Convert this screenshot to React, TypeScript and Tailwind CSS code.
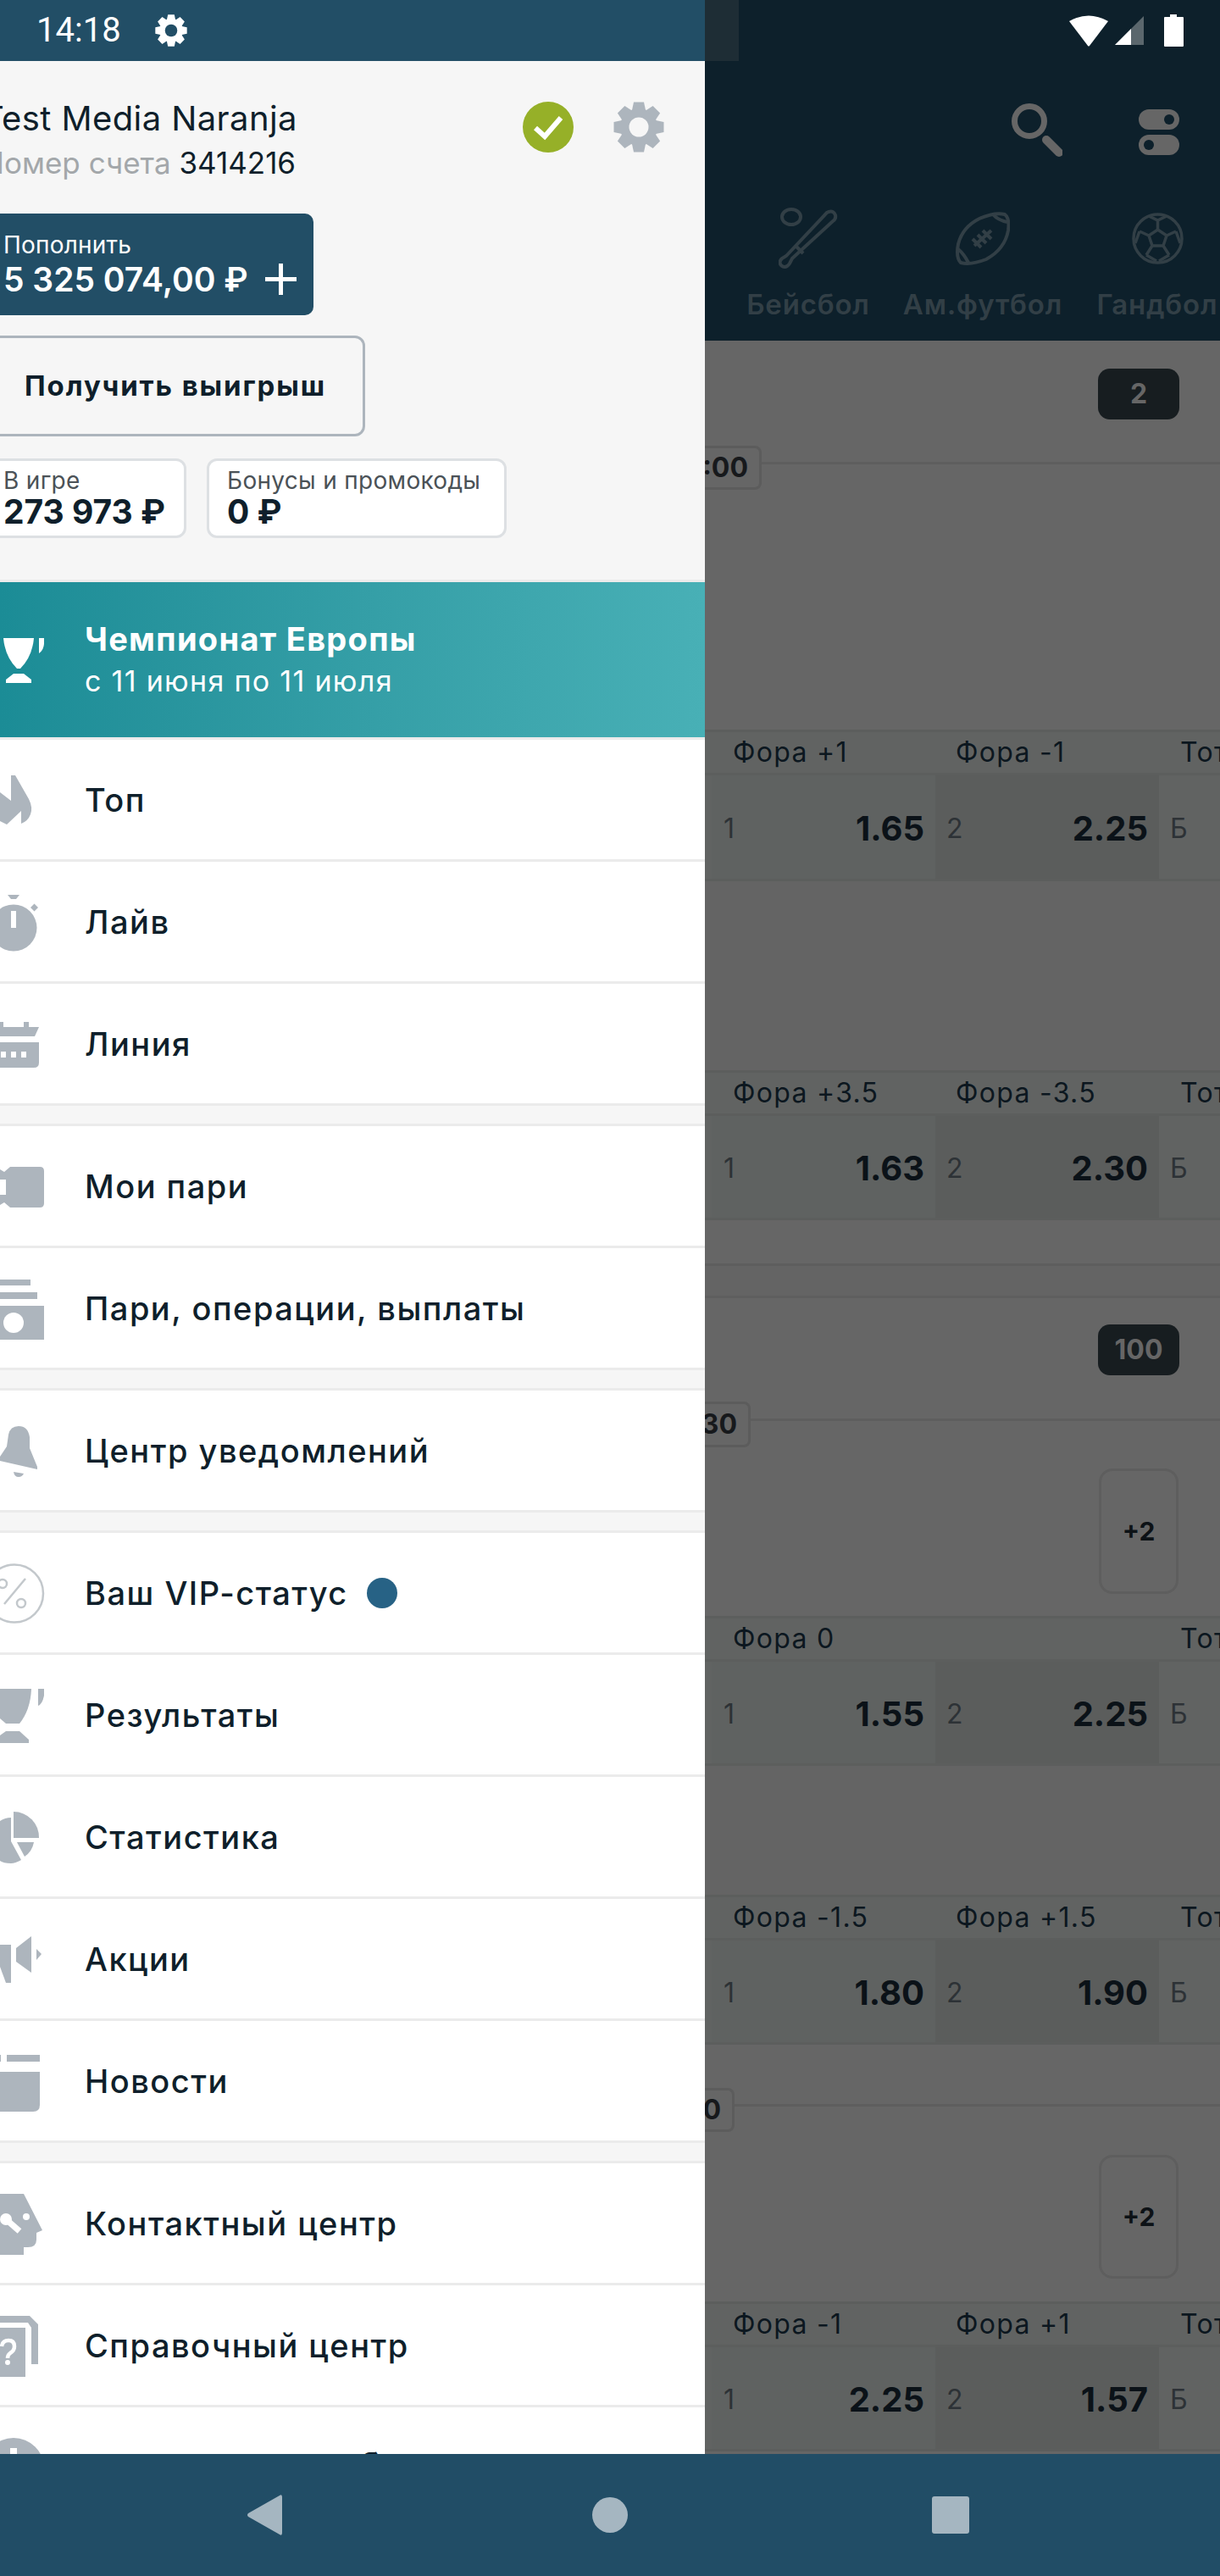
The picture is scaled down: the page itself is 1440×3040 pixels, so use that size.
import React from "react";

const G = "#adb5bd";

function Gear({ size, fill, hole }: { size: number; fill: string; hole: string }) {
  const angles = [0, 45, 90, 135, 180, 225, 270, 315];
  return (
    <svg width={size} height={size} viewBox="0 0 60 60">
      <circle cx="30" cy="30" r="22" fill={fill} />
      {angles.map((a) => (
        <path key={a} d="M24 0.5 H36 L38 10 H22 Z" fill={fill} transform={`rotate(${a} 30 30)`} />
      ))}
      <circle cx="30" cy="30" r="11.5" fill={hole} />
    </svg>
  );
}

function RowIcon({ children }: { children: React.ReactNode }) {
  return (
    <svg width="100" height="141" viewBox="0 0 100 141" fill={G} className="shrink-0">
      {children}
    </svg>
  );
}

const menu: { label: string; icon: React.ReactNode; dot?: boolean }[][] = [
  [
    {
      label: "Топ",
      icon: <path d="M13 42 L18 42 L34 70 Q39 80 36 88 Q33 96 25 99 L25 84 L8 100 L0 96 L0 62 L13 72 Z" />,
    },
    {
      label: "Лайв",
      icon: (
        <>
          <circle cx="16" cy="78" r="27.5" />
          <path d="M9 39 H23 L19 44 H13 Z" />
          <path d="M40.5 49.5 L45 54 L40.5 58.5 L36 54 Z" />
          <rect x="13" y="58" width="6" height="20" fill="#fff" />
        </>
      ),
    },
    {
      label: "Линия",
      icon: (
        <>
          <rect x="0" y="45" width="4" height="6" />
          <rect x="28" y="45" width="6" height="6" />
          <path d="M0 51 H46 L41 62 H0 Z" />
          <path d="M0 69 H46 V93 Q46 99 40 99 H0 Z" />
          <rect x="1" y="80" width="6" height="7" fill="#fff" />
          <rect x="13" y="80" width="6" height="7" fill="#fff" />
          <rect x="25" y="80" width="6" height="7" fill="#fff" />
        </>
      ),
    },
  ],
  [
    {
      label: "Мои пари",
      icon: (
        <>
          <path d="M12 48 H47 Q52 48 52 53 V91 Q52 96 47 96 H12 L5 90 L0 93 V51 L5 54 Z" />
          <rect x="0" y="63" width="7" height="18" fill="#fff" />
        </>
      ),
    },
    {
      label: "Пари, операции, выплаты",
      icon: (
        <>
          <rect x="0" y="37" width="36" height="7" />
          <rect x="0" y="52" width="44" height="8" />
          <rect x="0" y="68" width="52" height="40" />
          <ellipse cx="16" cy="88" rx="12" ry="12" fill="#fff" />
        </>
      ),
    },
  ],
  [
    {
      label: "Центр уведомлений",
      icon: (
        <>
          <path d="M22 42 Q33 42 35 55 L35 68 L44 90 V93 L0 83 V78 L8 66 L10 52 Q12 42 22 42 Z" />
          <path d="M16 96 L28 98 Q26 102 22 102 Q17 102 16 96 Z" />
        </>
      ),
    },
  ],
  [
    {
      label: "Ваш VIP-статус",
      dot: true,
      icon: (
        <g fill="none" stroke="#c3c8cc" strokeWidth="2.5">
          <circle cx="17" cy="71.5" r="34" />
          <path d="M5 84 L30 54" strokeWidth="2.5" />
          <circle cx="3" cy="60" r="5" />
          <circle cx="25" cy="83" r="5" />
        </g>
      ),
    },
    {
      label: "Результаты",
      icon: (
        <>
          <path d="M0 40 H37 Q36 65 23 81 H7 L0 75 Z" />
          <path d="M45 40 H52 V48 Q50 58 45 60 Z" />
          <path d="M7 90 H23 L34 100 V104 H0 V95 Z" />
        </>
      ),
    },
    {
      label: "Статистика",
      icon: (
        <>
          <path d="M16 41 A30 30 0 0 1 46 72 H16 Z" />
          <path d="M13 48 V76 L25 98 Q18 102 13 102 Q4 102 0 99 V52 Q6 48 13 48 Z" />
          <path d="M20 77 H40 Q38 88 29 94 Z" />
        </>
      ),
    },
    {
      label: "Акции",
      icon: (
        <>
          <path d="M0 54 H13 V99 H7 L0 80 Z" />
          <path d="M37 44 V87 L19 74 V58 Z" />
          <path d="M43 59 L49 65 L43 72 Z" />
        </>
      ),
    },
    {
      label: "Новости",
      icon: (
        <>
          <rect x="0" y="40" width="1" height="8" />
          <rect x="8" y="40" width="39" height="8" />
          <path d="M0 60 H47 V99 Q47 107 39 107 H0 Z" />
        </>
      ),
    },
  ],
  [
    {
      label: "Контактный центр",
      icon: (
        <>
          <path d="M0 36 H28 L50 79 L43 82 V90 Q43 99 33 99 H28 V108 H0 Z" />
          <circle cx="7" cy="66" r="7" fill="#fff" />
          <path d="M7 66 L23 80" stroke="#fff" strokeWidth="7" fill="none" />
          <circle cx="31" cy="63" r="4" fill="#fff" />
        </>
      ),
    },
    {
      label: "Справочный центр",
      icon: (
        <>
          <path d="M0 36 H35 L45 46 V93 H37 V50 L33 44 H0 Z" />
          <rect x="0" y="50" width="30" height="58" />
          <path d="M2 72 Q3 65 10 65 Q17 65 17 72 Q17 77 12 80 Q9 82 9 86" fill="none" stroke="#fff" strokeWidth="4.5" />
          <circle cx="9" cy="91" r="3" fill="#fff" />
        </>
      ),
    },
  ],
];

function MenuRow({ label, icon, dot }: { label: string; icon: React.ReactNode; dot?: boolean }) {
  return (
    <div className="flex h-[141px] items-center bg-white">
      <RowIcon>{icon}</RowIcon>
      <span className="text-[38px] leading-none font-medium tracking-[1.5px] text-[#0f1f2b]">{label}</span>
      {dot && <span className="ml-[22px] h-[36px] w-[36px] rounded-full bg-[#276285]" />}
    </div>
  );
}

function Line() {
  return <div className="h-[3px] shrink-0 bg-[#ebebeb]" />;
}

function Drawer() {
  return (
    <div className="flex w-[832px] shrink-0 flex-col overflow-hidden bg-white">
      <div className="flex h-[72px] shrink-0 items-center bg-[#224e66]">
        <span className="ml-[43px] font-['Roboto',sans-serif] text-[40px] leading-none text-white">14:18</span>
        <span className="ml-[40px]">
          <Gear size={38} fill="#ffffff" hole="#224e66" />
        </span>
      </div>
      <div className="flex h-[612px] shrink-0 flex-col bg-[#f6f6f6] pt-[43px] pl-[5px]">
        <div className="flex justify-between">
          <div className="-ml-[26px]">
            <div className="h-[52px] text-[40px] leading-[50px] tracking-[0.4px] whitespace-nowrap text-[#0f1f2b]">Test Media Naranja</div>
            <div className="h-[52px] text-[35px] leading-[50px] whitespace-nowrap text-[#a3a7aa]">
              Номер счета <span className="text-[#0f1f2b]">3414216</span>
            </div>
          </div>
          <div className="mt-[5px] mr-[48px] flex gap-[47px]">
            <svg width="60" height="60" viewBox="0 0 60 60">
              <circle cx="30" cy="30" r="30" fill="#96b028" />
              <path d="M15 31 L26 41 L45 19" stroke="#fff" strokeWidth="6" fill="none" />
            </svg>
            <Gear size={60} fill={G} hole="#f6f6f6" />
          </div>
        </div>
        <div className="mt-[33px] -ml-[25px] flex h-[120px] w-[390px] flex-col justify-center rounded-[10px] bg-[#224e66] pb-[3px] pl-[24px] text-white">
          <div className="text-[28px] leading-[38px] tracking-[0.2px]">Пополнить</div>
          <div className="flex items-center text-[39px] leading-[44px] font-semibold">
            5 325 074,00 ₽
            <svg width="37" height="37" viewBox="0 0 37 37" className="ml-[20px]">
              <path d="M18.5 0 V37 M0 18.5 H37" stroke="#fff" strokeWidth="5" />
            </svg>
          </div>
        </div>
        <div className="mt-[24px] -ml-[25px] flex h-[119px] w-[451px] items-center rounded-[12px] border-[3px] border-[#adb5bd] pl-[46px]">
          <span className="text-[33px] font-bold tracking-[1.9px] text-[#0f1f2b]">Получить выигрыш</span>
        </div>
        <div className="mt-[26px] flex gap-[24px]">
          <div className="-ml-[25px] flex h-[94px] w-[240px] shrink-0 flex-col justify-center rounded-[12px] border-[3px] border-[#dde0e3] bg-white pb-[3px] pl-[21px]">
            <div className="text-[28px] leading-[34px] tracking-[0.3px] text-[#4b5257]">В игре</div>
            <div className="text-[39px] leading-[40px] font-bold text-[#0f1f2b]">273 973 ₽</div>
          </div>
          <div className="flex h-[94px] w-[354px] shrink-0 flex-col justify-center rounded-[12px] border-[3px] border-[#dde0e3] bg-white pb-[3px] pl-[21px]">
            <div className="text-[28px] leading-[34px] tracking-[0.3px] whitespace-nowrap text-[#4b5257]">Бонусы и промокоды</div>
            <div className="text-[39px] leading-[40px] font-bold text-[#0f1f2b]">0 ₽</div>
          </div>
        </div>
      </div>
      <Line />
      <div className="flex h-[183px] shrink-0 items-center bg-gradient-to-r from-[#1b8c96] to-[#48b0b6]">
        <svg width="100" height="183" viewBox="0 0 100 183" fill="#fff" className="shrink-0">
          <path d="M4 66 H40 Q38 88 24 102 H20 Q6 88 4 66 Z" />
          <path d="M46 66 H52 V73 Q51 81 46 84 Z" />
          <path d="M16 108 H28 L37 115 V119 H7 V115 Z" />
        </svg>
        <div className="text-white">
          <div className="text-[38px] leading-[50px] font-bold tracking-[1.3px] whitespace-nowrap">Чемпионат Европы</div>
          <div className="text-[34px] leading-[50px] tracking-[1.3px] whitespace-nowrap">с 11 июня по 11 июля</div>
        </div>
      </div>
      <Line />
      {menu.map((group, i) => (
        <div key={i} className="shrink-0">
          {i > 0 && <div className="h-[21px] bg-[#f6f6f6]" />}
          {i > 0 && <Line />}
          {group.map((item) => (
            <div key={item.label}>
              <MenuRow {...item} />
              <Line />
            </div>
          ))}
        </div>
      ))}
      <div className="flex h-[141px] shrink-0 bg-white">
        <svg width="60" height="141" viewBox="0 0 60 141" fill={G} className="shrink-0">
          <circle cx="16" cy="72" r="36" />
          <rect x="12" y="48" width="8" height="24" fill="#fff" />
        </svg>
        <span className="mt-[48px] ml-[365px] text-[38px] leading-none font-medium text-[#0f1f2b]">б</span>
      </div>
    </div>
  );
}

function Chip({ text, width, height, mb }: { text: string; width: number; height: number; mb: number }) {
  return (
    <div className="flex items-center">
      <div
        style={{ width, height }}
        className="flex shrink-0 items-center justify-end rounded-r-[8px] border-y-[3px] border-r-[3px] border-[#5c5c5c] pr-[13px] text-[32px] font-bold text-[#17191c]"
      >
        {text}
      </div>
      <div style={{ marginBottom: mb }} className="h-[3px] flex-1 bg-[#5e5e5e]" />
    </div>
  );
}

function Badge({ text }: { text: string }) {
  return (
    <div className="mr-[48px] flex h-[60px] w-[96px] items-center justify-center self-end rounded-[14px] bg-[#171d20] text-[32px] font-bold text-[#666666]">
      {text}
    </div>
  );
}

function Plus({ h }: { h: number }) {
  return (
    <div
      style={{ height: h }}
      className="mr-[49px] flex w-[94px] items-center justify-center self-end rounded-[16px] border-[3px] border-[#5e5e5e] text-[30px] font-bold text-[#0d1216]"
    >
      +2
    </div>
  );
}

function Market({ a, b, o1, o2, tall }: { a: string; b?: string; o1: string; o2: string; tall?: boolean }) {
  return (
    <div className="shrink-0 bg-[#616362]">
      <div className="flex h-[54px] items-center border-y-[3px] border-[#5c5e5d] text-[32px] tracking-[1.3px] whitespace-nowrap text-[#0c171f]">
        <div className="w-[296px] shrink-0 pl-[33px]">{a}</div>
        <div className="w-[265px] shrink-0">{b}</div>
        <div className="shrink-0">Тотал</div>
      </div>
      <div className={`flex items-stretch border-b-[3px] border-[#5c5e5d] pl-[8px] ${tall ? "h-[125px]" : "h-[123px]"}`}>
        <div className="flex w-[264px] shrink-0 items-center justify-between bg-[#5f6261] pt-[4px] pr-[13px] pl-[14px]">
          <span className="text-[32px] text-[#2d3236]">1</span>
          <span className="text-[40px] font-bold text-[#0b1218]">{o1}</span>
        </div>
        <div className="flex w-[264px] shrink-0 items-center justify-between bg-[#5b5d5c] pt-[4px] pr-[13px] pl-[13px]">
          <span className="text-[32px] text-[#2d3236]">2</span>
          <span className="text-[40px] font-bold text-[#0b1218]">{o2}</span>
        </div>
        <div className="flex flex-1 items-center pt-[4px] pl-[13px]">
          <span className="text-[32px] text-[#2d3236]">Б</span>
        </div>
      </div>
    </div>
  );
}

const SPORT = "#323f46";

const sports: { label: string; icon: React.ReactNode }[] = [
  {
    label: "Бейсбол",
    icon: (
      <svg width="70" height="73" viewBox="0 0 70 73" fill="none" stroke={SPORT} strokeWidth="4">
        <ellipse cx="15" cy="11" rx="11" ry="9" />
        <path d="M59 5 Q65 3 67 9 Q68 13 64 16 L16 60 L13 66 Q9 72 4 69 Q-1 65 4 60 L9 57 L57 6 Z" />
        <path d="M21 46 L29 54" />
      </svg>
    ),
  },
  {
    label: "Ам.футбол",
    icon: (
      <svg width="64" height="63" viewBox="0 0 64 63" fill="none" stroke={SPORT} strokeWidth="4">
        <path d="M58 3 Q64 8 62 22 Q58 44 36 56 Q18 63 6 60 Q0 54 3 38 Q8 18 28 8 Q46 0 58 3 Z" />
        <path d="M44 3 Q50 10 61 12 M3 44 Q10 50 15 60" />
        <path d="M22 40 L42 22 M26 27 L36 37 M32 22 L42 32 M20 32 L30 42" />
      </svg>
    ),
  },
  {
    label: "Гандбол",
    icon: (
      <svg width="61" height="61" viewBox="0 0 61 61" fill="none" stroke={SPORT} strokeWidth="3.5">
        <circle cx="30.5" cy="30.5" r="28.5" />
        <path d="M30.5 20 L41 27 L37 39 H24 L20 27 Z" />
        <path d="M30.5 20 V9 M41 27 L52 22 M37 39 L44 50 M24 39 L17 50 M20 27 L9 22 M20 4 L30.5 9 L41 4 M52 22 L57 36 M44 50 L32 57 M17 50 L29 57 M9 22 L4 36" />
      </svg>
    ),
  },
];

function Sports() {
  return (
    <div className="flex h-[402px] shrink-0 flex-col bg-[#0d202b]">
      <div className="flex h-[72px] shrink-0 items-center">
        <div className="h-[72px] w-[40px] bg-[#1e2d35]" />
        <svg width="46" height="38" viewBox="0 0 46 38" className="ml-[390px]" fill="#fff">
          <path d="M0 8 Q23 -5 46 8 L24 37 Q23 38 22 37 Z" />
        </svg>
        <svg width="34" height="34" viewBox="0 0 34 34" className="ml-[8px]">
          <path d="M0 34 L34 0 V34 Z" fill="#5b676d" />
          <path d="M0 34 L19 15 V34 Z" fill="#fff" />
        </svg>
        <svg width="23" height="38" viewBox="0 0 23 38" className="ml-[24px]" fill="#fff">
          <path d="M7 0 H15 V3 H22 Q23 3 23 4 V37 Q23 38 22 38 H1 Q0 38 0 37 V4 Q0 3 1 3 H7 Z" />
        </svg>
      </div>
      <div className="flex h-[173px] shrink-0 items-start pt-[50px]">
        <svg width="60" height="63" viewBox="0 0 60 63" className="ml-[362px]" fill="none">
          <circle cx="21" cy="21" r="17.5" stroke="#666666" strokeWidth="7" />
          <path d="M41 43 L56 58" stroke="#666666" strokeWidth="10" strokeLinecap="round" />
        </svg>
        <svg width="48" height="54" viewBox="0 0 48 54" className="mt-[7px] ml-[90px]">
          <rect x="0" y="0" width="48" height="24" rx="12" fill="#666666" />
          <circle cx="36" cy="12" r="6" fill="#0d202b" />
          <rect x="0" y="30" width="48" height="24" rx="12" fill="#666666" />
          <circle cx="12" cy="42" r="6" fill="#0d202b" />
        </svg>
      </div>
      <div className="flex pl-[19px]">
        {sports.map((s) => (
          <div key={s.label} className="flex w-[206px] shrink-0 flex-col items-center">
            <div className="flex h-[73px] items-center">{s.icon}</div>
            <div className="mt-[22px] text-[33px] leading-[38px] font-semibold tracking-[0.8px] whitespace-nowrap text-[#323f46]">
              {s.label}
            </div>
          </div>
        ))}
      </div>
    </div>
  );
}

function Content() {
  return (
    <div className="flex w-[608px] shrink-0 flex-col overflow-hidden bg-[#666666]">
      <Sports />
      <div className="flex h-[459px] shrink-0 flex-col pt-[33px]">
        <Badge text="2" />
        <div className="mt-[31px]">
          <Chip text=":00" width={67} height={52} mb={12} />
        </div>
      </div>
      <Market tall a="Фора +1" b="Фора -1" o1="1.65" o2="2.25" />
      <div className="h-[223px] shrink-0 bg-[#646464]" />
      <Market a="Фора +3.5" b="Фора -3.5" o1="1.63" o2="2.30" />
      <div className="h-[51px] shrink-0 bg-[#666666]" />
      <div className="h-[41px] shrink-0 border-y-[3px] border-[#5e5e5e] bg-[#646464]" />
      <div className="flex h-[375px] shrink-0 flex-col pt-[31px]">
        <Badge text="100" />
        <div className="mt-[31px]">
          <Chip text="30" width={54} height={54} mb={12} />
        </div>
        <div className="mt-[25px] flex flex-col">
          <Plus h={148} />
        </div>
      </div>
      <Market a="Фора 0" o1="1.55" o2="2.25" />
      <div className="h-[152px] shrink-0 bg-[#646464]" />
      <Market a="Фора -1.5" b="Фора +1.5" o1="1.80" o2="1.90" />
      <div className="flex h-[303px] shrink-0 flex-col pt-[51px]">
        <Chip text="0" width={35} height={52} mb={12} />
        <div className="mt-[27px] flex flex-col">
          <Plus h={146} />
        </div>
      </div>
      <Market a="Фора -1" b="Фора +1" o1="2.25" o2="1.57" />
    </div>
  );
}

export default function App() {
  return (
    <div className="flex h-[3040px] w-[1440px] flex-col overflow-hidden font-['Inter',sans-serif]">
      <div className="flex h-[2896px] shrink-0 overflow-hidden">
        <Drawer />
        <Content />
      </div>
      <div className="flex h-[144px] shrink-0 items-center bg-[#214d66]">
        <svg width="41" height="48" viewBox="0 0 41 48" className="ml-[292px]" fill="#a5b6c1">
          <path d="M38 1 Q41 -1 41 3 V45 Q41 49 38 47 L1 26 Q-1 24 1 22 Z" />
        </svg>
        <div className="ml-[366px] h-[42px] w-[42px] rounded-full bg-[#a5b6c1]" />
        <div className="ml-[359px] h-[44px] w-[44px] rounded-[3px] bg-[#a5b6c1]" />
      </div>
    </div>
  );
}
